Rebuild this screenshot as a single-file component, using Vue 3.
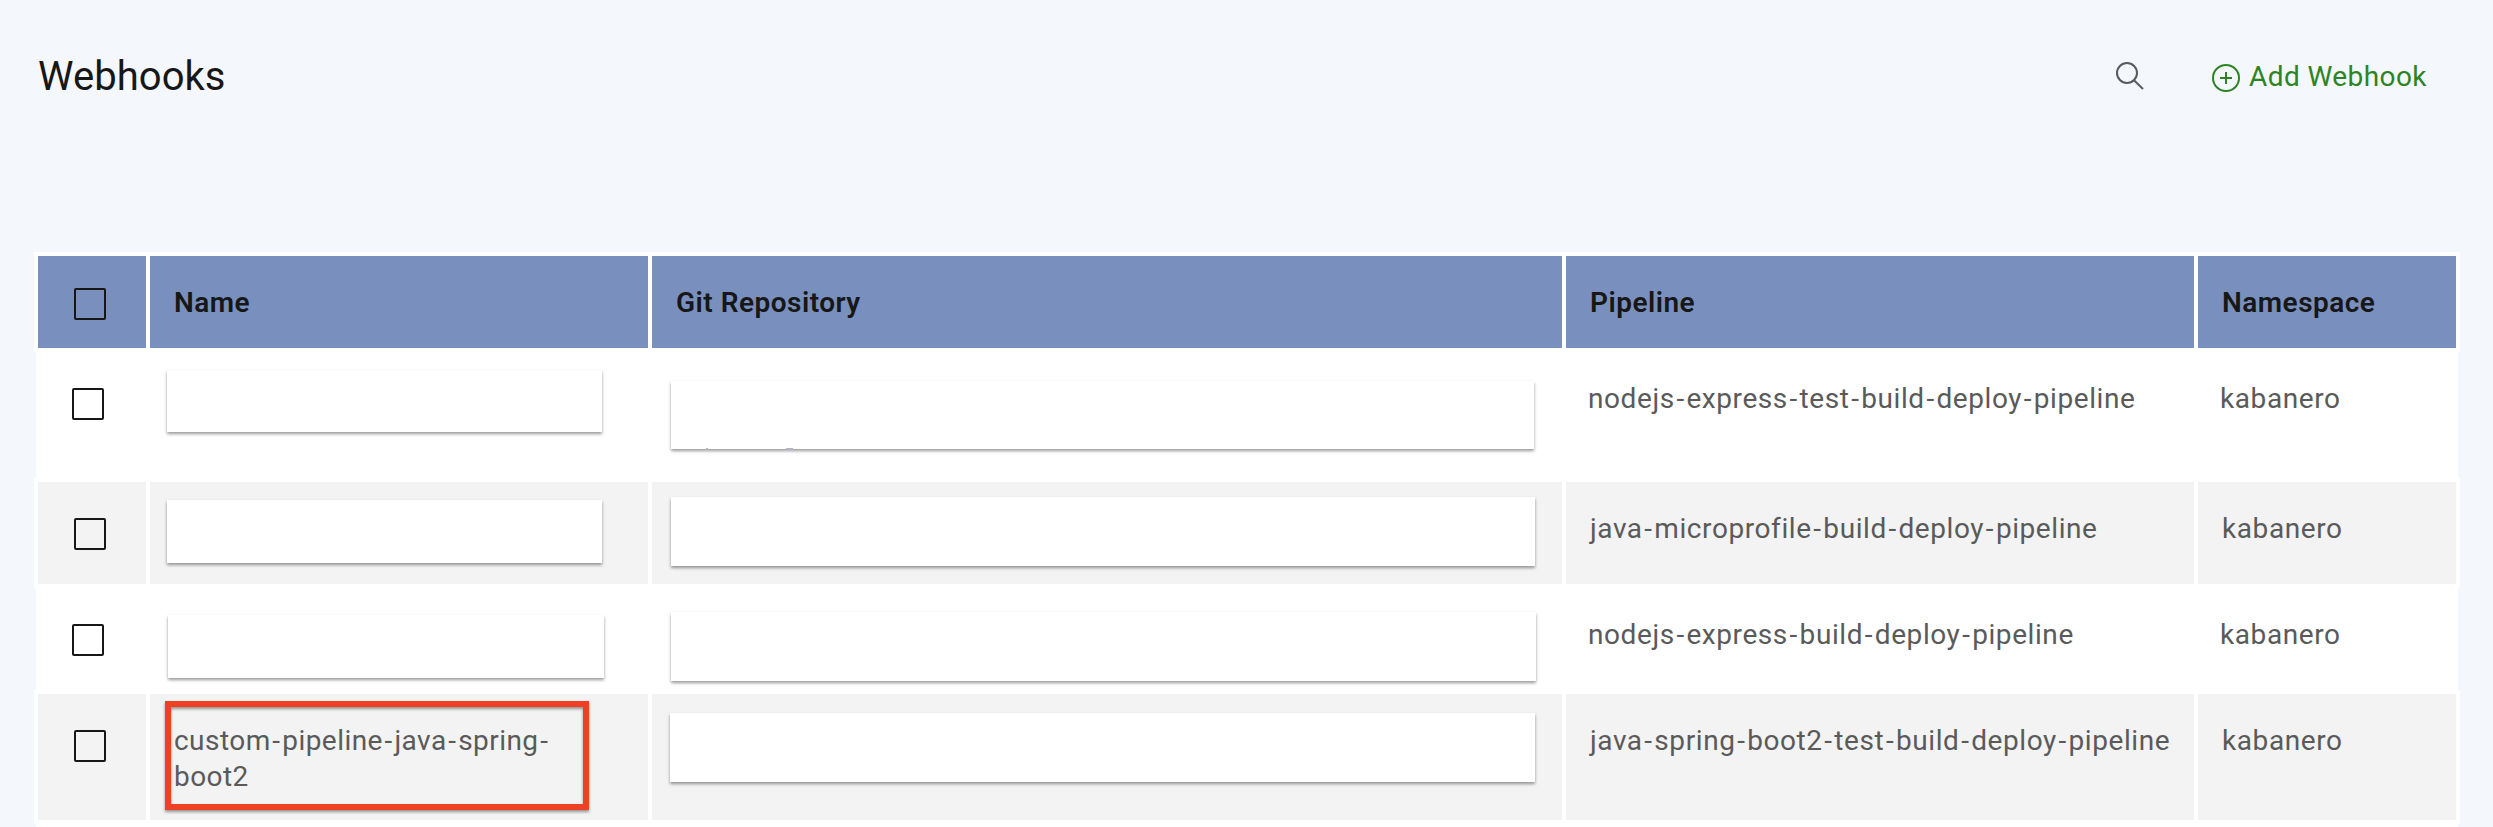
<script setup>
const columns = ['Name', 'Git Repository', 'Pipeline', 'Namespace']

// Each cover hides a private value: left / top / width / height inside its cell.
const rows = [
  {
    size: 'tall',
    nameCover: [19, 18, 435, 62],
    repoCover: [21, 29, 863, 68],
    clipped: true,
    pipeline: 'nodejs-express-test-build-deploy-pipeline',
    namespace: 'kabanero',
  },
  {
    size: 'short',
    shaded: true,
    nameCover: [17, 18, 435, 63],
    repoCover: [19, 15, 864, 69],
    pipeline: 'java-microprofile-build-deploy-pipeline',
    namespace: 'kabanero',
  },
  {
    size: 'short',
    nameCover: [20, 27, 436, 63],
    repoCover: [21, 24, 865, 69],
    pipeline: 'nodejs-express-build-deploy-pipeline',
    namespace: 'kabanero',
  },
  {
    size: 'double',
    shaded: true,
    name: ['custom-pipeline-java-spring-', 'boot2'],
    repoCover: [18, 19, 865, 69],
    pipeline: 'java-spring-boot2-test-build-deploy-pipeline',
    namespace: 'kabanero',
  },
]

const box = ([left, top, width, height]) => ({
  left: `${left}px`,
  top: `${top}px`,
  width: `${width}px`,
  height: `${height}px`,
})
const parts = (text) => text.split(/(-)/).filter(Boolean)
</script>

<template>
  <main class="page">
    <header class="toolbar">
      <h1 class="title">Webhooks</h1>
      <svg class="search" viewBox="0 0 32 32" width="32" height="32">
        <circle cx="13" cy="13" r="10" />
        <path d="M20 20.3 29 29" />
      </svg>
      <div class="add">
        <svg class="add-icon" viewBox="0 0 28 28" width="28" height="28">
          <circle cx="14" cy="14" r="13" />
          <path d="M14 8v12M8 14h12" />
        </svg>
        <span>Add Webhook</span>
      </div>
    </header>

    <section class="table">
      <div class="row framed head">
        <div class="cell check"><i class="box"></i></div>
        <div v-for="c in columns" :key="c" class="cell">{{ c }}</div>
      </div>
      <div
        v-for="row in rows"
        :key="row.pipeline"
        class="row"
        :class="[row.size, row.shaded ? 'framed shaded' : 'plain']"
      >
        <div class="cell check"><i class="box"></i></div>
        <div class="cell name">
          <div v-if="row.nameCover" class="cover" :style="box(row.nameCover)"></div>
          <template v-else>
            <div v-for="line in row.name" :key="line"><span v-for="(p, i) in parts(line)" :key="i" :class="{ hyphen: p === '-' }">{{ p }}</span></div>
            <div class="highlight"></div>
          </template>
        </div>
        <div class="cell">
          <div class="cover" :style="box(row.repoCover)"></div>
          <template v-if="row.clipped">
            <i class="tail tail-p"></i>
            <i class="tail tail-g"></i>
          </template>
        </div>
        <div class="cell"><span v-for="(p, i) in parts(row.pipeline)" :key="i" :class="{ hyphen: p === '-' }">{{ p }}</span></div>
        <div class="cell">{{ row.namespace }}</div>
      </div>
      <div class="row plain rest"></div>
    </section>
  </main>
</template>

<style>
body {
  background: #f4f7fc;
  overflow: hidden;
}
</style>

<style scoped>
.page {
  box-sizing: border-box;
  width: 2493px;
  height: 827px;
  overflow: hidden;
  background: #f4f7fc;
  font: 400 28px/36px Roboto, "Liberation Sans", sans-serif;
  letter-spacing: 0.58px;
  color: #5a5a5a;
}
.toolbar {
  box-sizing: border-box;
  display: flex;
  align-items: flex-start;
  height: 252px;
  padding: 52px 64px 0 38px;
}
.title {
  margin: 1px auto 0 0;
  font-size: 40px;
  line-height: 48px;
  font-weight: 400;
  letter-spacing: 0.05px;
  color: #171717;
}
.search,
.add-icon {
  display: block;
  flex: none;
  fill: none;
  stroke: currentColor;
  stroke-width: 2;
}
.search {
  margin: 8px 66px 0 0;
}
.add {
  display: flex;
  gap: 9px;
  width: 217px;
  padding-top: 7px;
  color: #2d8423;
  letter-spacing: 0.42px;
  white-space: nowrap;
}
.add-icon {
  margin-top: 5px;
}
.table {
  width: 2426px;
  margin-left: 34px;
}
.row {
  box-sizing: border-box;
  display: grid;
  grid-template-columns: 108px 498px 910px 628px 1fr;
  column-gap: 4px;
  background: #fff;
}
.plain {
  margin: 0 2px;
}
.framed {
  border: 4px solid #fff;
}
.head {
  height: 100px;
  font-weight: 600;
  letter-spacing: 0.48px;
  color: #171717;
}
.tall {
  height: 126px;
}
.short {
  height: 102px;
}
.short.shaded {
  height: 110px;
}
.double {
  height: 134px;
}
.rest {
  height: 3px;
}
.cell {
  position: relative;
  padding: 29px 0 0 24px;
  white-space: nowrap;
}
.shaded .name {
  letter-spacing: 0.45px;
}
.head .cell {
  background: #7990be;
}
.shaded .cell {
  background: #f3f3f3;
}
.cell.check {
  padding: 36px 0 0 36px;
}
.head .check {
  padding-top: 32px;
}
.box {
  display: block;
  box-sizing: border-box;
  width: 32px;
  height: 32px;
  border: 2px solid #171717;
  border-radius: 2px;
}
.hyphen {
  margin: 0 1.7px;
}
.cover {
  position: absolute;
  background: #fff;
  box-shadow: 0 2px 3px rgba(0, 0, 0, 0.4);
}
.highlight {
  position: absolute;
  left: 15px;
  top: 7px;
  box-sizing: border-box;
  width: 424px;
  height: 109px;
  border: 6px solid #ee4023;
  filter: drop-shadow(0 2px 1.5px rgba(0, 0, 0, 0.4));
}
.tail {
  position: absolute;
  top: 96px;
  height: 2px;
  background: #b6b2c8;
}
.tail-p {
  left: 56px;
  width: 2px;
}
.tail-g {
  left: 136px;
  width: 7px;
}
</style>
